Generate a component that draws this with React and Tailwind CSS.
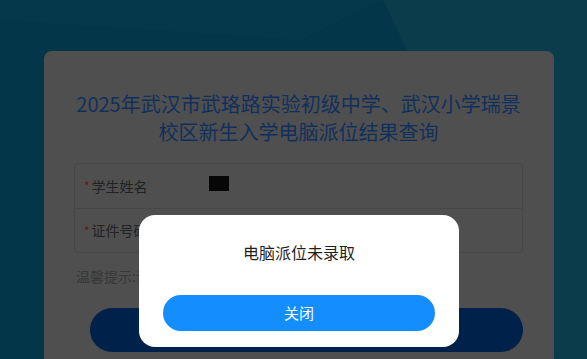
import React from 'react';

export default function App() {
  const rows = [
    { label: '学生姓名', filled: true },
    { label: '证件号码', filled: false },
  ];

  return (
    <div
      className="relative w-full h-[359px] overflow-hidden bg-[#04364a]"
      style={{ fontFamily: '"Noto Sans CJK SC", "Noto Sans", sans-serif' }}
    >
      {/* background decoration */}
      <svg className="absolute inset-0" width="587" height="359" viewBox="0 0 587 359">
        <polygon points="383,0 587,0 587,359 555,359" fill="#0b3c4b" />
        <polygon points="0,0 383,0 300,40 0,20" fill="#063a4c" opacity="0.6" />
      </svg>

      {/* page card (dimmed by mask) */}
      <div className="relative ml-[44px] mt-[51px] w-[510px] h-[320px] rounded-t-lg bg-[#4f4f4f] pl-[30px] pr-[31px] pt-[39px]">
        <h1 className="text-center text-[20px] leading-[28px] text-[#112f5c]">
          2025年武汉市武珞路实验初级中学、武汉小学瑞景
          <br />
          校区新生入学电脑派位结果查询
        </h1>

        <div className="mt-[17px] rounded-[4px] border border-[#474747]">
          {rows.map((row, i) => (
            <div
              key={row.label}
              className={`flex items-center h-[44px] pl-[9px] ${i > 0 ? 'border-t border-[#474747]' : ''}`}
            >
              <span className="text-[12px] text-[#6a1414] mr-[2px]">*</span>
              <span className="text-[14px] text-[#222222] w-[117px]">{row.label}</span>
              {row.filled && <div className="w-[20px] h-[15px] -mt-[6px] bg-[#070707]" />}
            </div>
          ))}
        </div>

        <p className="mt-[13px] pl-[2px] text-[14px] leading-[20px] text-[#383838]">温馨提示:请输入学生信息查询</p>

        <div className="mt-[22px] ml-[16px] h-[44px] rounded-full bg-[#00224a]" />
      </div>

      {/* dialog */}
      <div className="absolute left-[139px] top-[215px] w-[320px] h-[132px] rounded-[16px] bg-white px-6 pt-[25px]">
        <p className="text-center text-[16px] leading-[24px] text-[#1f1f1f]">电脑派位未录取</p>
        <button className="mt-[31px] w-full h-[36px] rounded-full bg-[#148efe] text-white text-[15px]">
          关闭
        </button>
      </div>
    </div>
  );
}
